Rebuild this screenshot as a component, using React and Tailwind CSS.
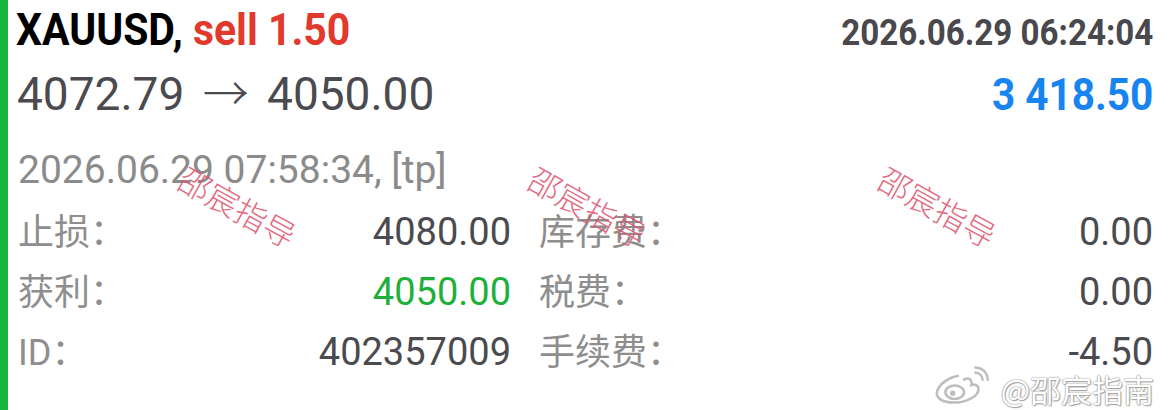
import React from "react";

const ROBOTO = "font-['Roboto','Liberation_Sans',sans-serif]";
const CJK = "font-['Roboto','Noto_Sans_CJK_SC',sans-serif]";

const ROWS = [
  { l: "止损：", lv: "4080.00", r: "库存费：", rv: "0.00" },
  { l: "获利：", lv: "4050.00", lvClass: "text-[#1fb03c]", r: "税费：", rv: "0.00" },
  { l: "ID：", lv: "402357009", r: "手续费：", rv: "-4.50" },
];

const MARKS = ["left-[238px]", "left-[588px]", "left-[938px]"];

function Watermark({ pos }) {
  return (
    <span
      className={`pointer-events-none absolute top-[206px] ${pos} -translate-x-1/2 -translate-y-1/2 rotate-[29deg] whitespace-nowrap font-['Noto_Sans_CJK_SC',sans-serif] text-[32px] font-light leading-none text-[#e0566f]/90`}
    >
      邵宸指导
    </span>
  );
}

function WeiboTag() {
  return (
    <div className="pointer-events-none absolute bottom-[6px] right-[16px] flex items-end gap-[8px]">
      <svg width="60" height="38" viewBox="0 0 58 36" fill="none" stroke="#bdbdbd" strokeWidth="2.4">
        <path d="M25 9c-9 1-19 8-21 15-2 7 6 11 16 11 12 0 24-6 24-13 0-4-4-5-7-4 1-4-1-7-5-6l-3 1" fill="#fff" />
        <ellipse cx="21" cy="25" rx="9" ry="6.5" fill="#fff" />
        <circle cx="19" cy="26" r="2.6" fill="#bdbdbd" stroke="none" />
        <path d="M40 6c5 0 8 3 8 8" />
        <path d="M40 1c8 0 13 5 13 13" />
      </svg>
      <span className="font-['Noto_Sans_CJK_SC',sans-serif] text-[31px] leading-none text-white [text-shadow:0_0_1px_#888,0_0_2px_#999,1px_1px_1px_#aaa]">
        @邵宸指南
      </span>
    </div>
  );
}

export default function App() {
  return (
    <div className="relative flex h-[410px] w-[1170px] overflow-hidden bg-white">
      <div className="w-2 shrink-0 bg-[#17b53a]" />

      <div className={`flex-1 pl-[8px] pr-[17px] ${ROBOTO}`}>
        {/* symbol, side, volume + open time */}
        <div className="flex h-[60px] items-baseline justify-between leading-[60px]">
          <span className="origin-left scale-x-[0.91] whitespace-nowrap text-[45px] font-bold text-black">
            XAUUSD, <span className="text-[#e2392d]">sell 1.50</span>
          </span>
          <span className="origin-right scale-x-[0.92] whitespace-nowrap text-[36px] font-bold text-[#48484d]">
            2026.06.29 06:24:04
          </span>
        </div>

        {/* prices + profit */}
        <div className="flex h-[60px] items-baseline justify-between pl-[1px] leading-[60px]">
          <span className="whitespace-nowrap text-[46px] text-[#4a4a4f]">
            4072.79 <span className="mx-[7px] font-['Noto_Sans_CJK_SC',sans-serif] font-light">→</span> 4050.00
          </span>
          <span className="origin-right scale-x-[0.9] whitespace-nowrap text-[45px] font-bold text-[#1784ef]">
            3 418.50
          </span>
        </div>

        {/* close time */}
        <div className="mt-[18px] h-[64px] pl-[2px] text-[39px] leading-[64px] text-[#8b8b8b]">
          2026.06.29 07:58:34, [tp]
        </div>

        <div className="grid grid-cols-[493px_1fr] gap-x-[28px] pl-[2px]">
          {ROWS.map((row) => (
            <React.Fragment key={row.l}>
              <div className="flex h-[60px] items-baseline justify-between leading-[60px]">
                <span className={`${CJK} text-[36px] text-[#8e8e8e]`}>{row.l}</span>
                <span className={`text-[38px] ${row.lvClass || "text-[#4a4a4f]"}`}>{row.lv}</span>
              </div>
              <div className="flex h-[60px] items-baseline justify-between leading-[60px]">
                <span className={`${CJK} text-[36px] text-[#8e8e8e]`}>{row.r}</span>
                <span className="text-[38px] text-[#4a4a4f]">{row.rv}</span>
              </div>
            </React.Fragment>
          ))}
        </div>
      </div>

      {MARKS.map((pos) => (
        <Watermark key={pos} pos={pos} />
      ))}
      <WeiboTag />
    </div>
  );
}
